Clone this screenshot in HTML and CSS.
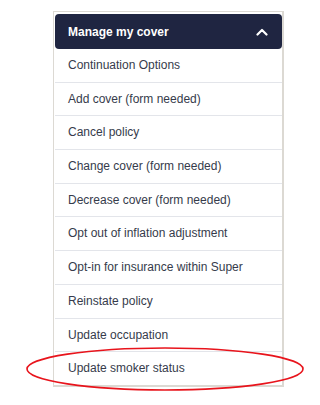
FILE: index.html
```html
<!DOCTYPE html>
<html lang="en">

<head>
    <meta charset="UTF-8">
    <meta name="viewport" content="width=device-width, initial-scale=1.0">
    <title>Manage my cover</title>
    <link rel="stylesheet" href="styles.css">
</head>

<body>
    <div class="page">
        <div class="cover-panel">
            <div class="panel-header">
                <span class="panel-title">Manage my cover</span>
                <svg class="chevron" width="12" height="8" viewBox="0 0 12 8">
                    <polyline points="1.5,6.5 6,2 10.5,6.5" fill="none" stroke="#fff" stroke-width="2.2"
                        stroke-linecap="round" stroke-linejoin="round" />
                </svg>
            </div>
            <ul class="option-list">
                <li class="option-item">Continuation Options</li>
                <li class="option-item">Add cover (form needed)</li>
                <li class="option-item">Cancel policy</li>
                <li class="option-item">Change cover (form needed)</li>
                <li class="option-item">Decrease cover (form needed)</li>
                <li class="option-item">Opt out of inflation adjustment</li>
                <li class="option-item">Opt-in for insurance within Super</li>
                <li class="option-item">Reinstate policy</li>
                <li class="option-item">Update occupation</li>
                <li class="option-item">Update smoker status</li>
            </ul>
        </div>

        <!-- red highlight drawn over the last item -->
        <svg class="highlight" width="284" height="48" viewBox="0 0 284 48">
            <ellipse cx="142" cy="24" rx="138" ry="21" fill="none" stroke="#e8141c" stroke-width="1.6" />
        </svg>
    </div>
</body>

</html>
```

FILE: styles.css
```css
body {
    margin: 0;
    background: #ffffff;
    font-family: Arial, "Liberation Sans", sans-serif;
}

.page {
    position: relative;
    width: 320px;
    height: 405px;
    padding-top: 11px;
    box-sizing: border-box;
}

.cover-panel {
    margin-left: 53px;
    width: 227px;
    border: 1px solid #dcd9d3;
    border-right-width: 2px;
    border-bottom-width: 2px;
    padding: 2px 0 0 1px;
    background: #ffffff;
}

.panel-header {
    display: flex;
    justify-content: space-between;
    align-items: center;
    height: 35px;
    padding: 0 14px 0 13px;
    background: #1f2541;
    border-radius: 4px;
}

.panel-title {
    color: #ffffff;
    font-size: 12px;
    font-weight: bold;
}

.chevron {
    display: block;
}

.option-list {
    list-style: none;
    margin: 0;
    padding: 0;
}

.option-item {
    height: 32.7px;
    line-height: 32.7px;
    padding-left: 13px;
    font-size: 12px;
    color: #363b4b;
    border-bottom: 1px solid #e3e5ea;
}

.option-item:last-child {
    border-bottom: none;
}

.highlight {
    position: absolute;
    left: 23px;
    top: 345px;
}
```
